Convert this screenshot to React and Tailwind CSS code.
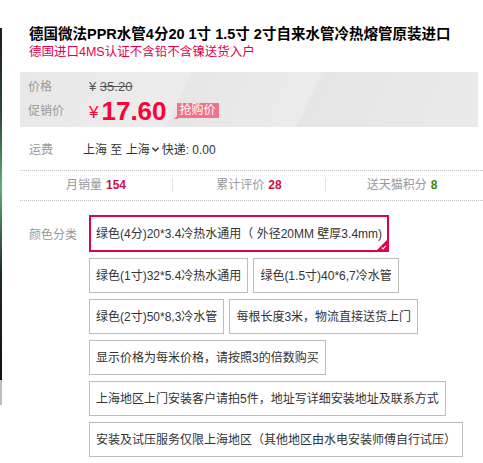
import { useState } from 'react'

const skus = [
  '绿色(4分)20*3.4冷热水通用（ 外径20MM 壁厚3.4mm)',
  '绿色(1寸)32*5.4冷热水通用',
  '绿色(1.5寸)40*6,7冷水管',
  '绿色(2寸)50*8,3冷水管',
  '每根长度3米，物流直接送货上门',
  '显示价格为每米价格，请按照3的倍数购买',
  '上海地区上门安装客户请拍5件，地址写详细安装地址及联系方式',
  '安装及试压服务仅限上海地区（其他地区由水电安装师傅自行试压）',
]

export default function App() {
  const [selected, setSelected] = useState(0)

  return (
    <div className="flex h-[463px] w-[483px] overflow-hidden bg-white font-['Liberation_Sans','Noto_Sans_CJK_SC',sans-serif] text-[12px] text-[#333]">
      {/* cropped edge of the gallery image */}
      <div className="flex w-[2px] shrink-0 flex-col pt-[28px]">
        <div className="h-[352px] bg-[linear-gradient(180deg,#1c1c1c_0%,#2d4a38_25%,#5fae7f_45%,#1e2a22_70%,#111_100%)]" />
        <div className="h-[25px] bg-[#bdbdbd]" />
      </div>

      <div className="flex flex-1 flex-col pl-[18px] pt-[25px]">
        <h1 className="whitespace-nowrap px-[9px] text-[14.5px] font-bold leading-[18px] text-black">
          德国微法PPR水管4分20 1寸 1.5寸 2寸自来水管冷热熔管原装进口
        </h1>
        <p className="px-[9px] text-[12.5px] leading-[18px] text-[#e5004f]">德国进口4MS认证不含铅不含镍送货入户</p>

        {/* price panel */}
        <div className="mt-[11px] flex h-[58px] w-[458px] flex-col bg-[linear-gradient(115deg,#e8e8e8_0%,#ececec_35%,#e6e6e6_36%,#ebebeb_62%,#e5e5e5_63%,#eaeaea_100%)] px-[8px] pt-[6px]">
          <div className="flex h-[18px] items-center">
            <span className="w-[61px] text-[#999]">价格</span>
            <span className="text-[13px] text-[#555]">
              ¥ <span className="line-through">35.20</span>
            </span>
          </div>
          <div className="flex h-[30px] items-center">
            <span className="w-[61px] text-[#999]">促销价</span>
            <span className="mt-[4px] text-[17px] text-[#ff0036]">¥</span>
            <span className="ml-[3px] text-[26px] font-bold leading-none text-[#ff0036]">17.60</span>
            <span className="relative ml-[10px] mt-[-2px] flex h-[15px] items-center bg-[#f2718b] px-[3px] text-[12px] leading-none text-white">
              抢购价
              <span className="absolute bottom-[-1px] left-[-3px] h-0 w-0 border-b-[4px] border-l-[4px] border-b-[#f2718b] border-l-transparent" />
            </span>
          </div>
        </div>

        {/* shipping */}
        <div className="mt-[13px] flex h-[20px] items-center px-[9px]">
          <span className="w-[54px] text-[#999]">运费</span>
          <span>上海 至 上海</span>
          <svg viewBox="0 0 10 10" className="ml-[1px] h-[9px] w-[9px]" fill="none" stroke="#333" strokeWidth="1.6">
            <path d="M1.5 3l3.5 3.5L8.5 3" />
          </svg>
          <span className="ml-[2px]">快递: 0.00</span>
        </div>

        <div className="mt-[10px] border-t border-dotted border-[#c4c4c4]" />

        {/* stats */}
        <div className="flex h-[31px] w-[458px] items-center">
          <div className="flex flex-1 justify-center text-[#999]">
            月销量<span className="ml-[4px] font-bold text-[#d0104c]">154</span>
          </div>
          <div className="h-[14px] w-px bg-[#e3e3e3]" />
          <div className="flex flex-1 justify-center text-[#999]">
            累计评价<span className="ml-[4px] font-bold text-[#d0104c]">28</span>
          </div>
          <div className="h-[14px] w-px bg-[#e3e3e3]" />
          <div className="flex flex-1 justify-center text-[#999]">
            送天猫积分<span className="ml-[4px] font-bold text-[#3b8a0c]">8</span>
          </div>
        </div>

        <div className="border-t border-dotted border-[#c4c4c4]" />

        {/* sku */}
        <div className="mt-[14px] flex">
          <span className="w-[69px] shrink-0 pl-[9px] pt-[11px] text-[#999]">颜色分类</span>
          <div className="flex flex-1 flex-wrap">
            {skus.map((s, i) =>
              i === selected ? (
                <button
                  key={s}
                  onClick={() => setSelected(i)}
                  className="relative mb-[6px] mr-[5px] flex h-[37px] items-center whitespace-nowrap border-2 border-[#e5004f] px-[5px] text-[12px] text-[#333]"
                >
                  {s}
                  <svg viewBox="0 0 10 10" className="absolute bottom-0 right-0 h-[10px] w-[10px]">
                    <path d="M10 0V10H0Z" fill="#e5004f" />
                    <path d="M4.6 7.6l1.5 1.3 2.6-3" fill="none" stroke="#fff" strokeWidth="1.1" />
                  </svg>
                </button>
              ) : (
                <button
                  key={s}
                  onClick={() => setSelected(i)}
                  className="mb-[6px] mr-[5px] flex h-[35px] items-center whitespace-nowrap border border-[#bdbdbd] px-[6px] text-[12px] text-[#333]"
                >
                  {s}
                </button>
              ),
            )}
          </div>
        </div>
      </div>
    </div>
  )
}
